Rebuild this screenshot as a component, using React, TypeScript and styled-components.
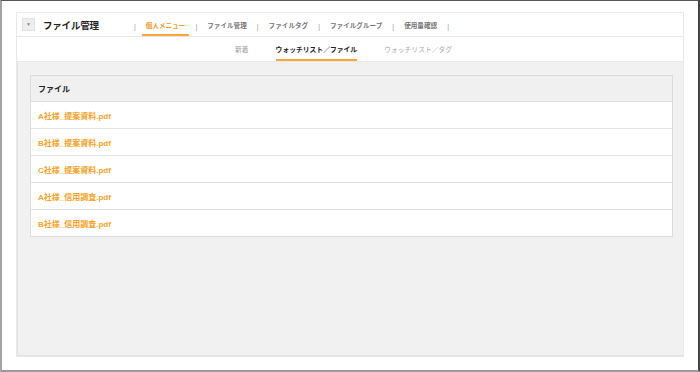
import React from "react";
import styled, { createGlobalStyle } from "styled-components";

const Global = createGlobalStyle`
  * { box-sizing: border-box; }
  html, body { margin: 0; padding: 0; background: #fff; }
  body { font-family: "Liberation Sans", "Noto Sans CJK JP", sans-serif; }
`;

const Frame = styled.div`
  width: 700px;
  height: 372px;
  border-top: 1px solid #555;
  border-left: 2px solid #a3a3a3;
  border-right: 2px solid #444;
  border-bottom: 2px solid #9a9a9a;
  padding: 11px 14px 13px 14px;
  background: #fff;
`;

const Panel = styled.div`
  height: 100%;
  display: flex;
  flex-direction: column;
  border: 1px solid #e8e8e8;
  background: #fff;
`;

const TopBar = styled.div`
  height: 24px;
  display: flex;
  align-items: center;
  padding-left: 5px;
  border-bottom: 1px solid #e6e6e6;
`;

const Toggle = styled.div`
  width: 13px;
  height: 13px;
  background: #eeeeee;
  border: 1px solid #e2e2e2;
  display: flex;
  align-items: center;
  justify-content: center;
  color: #888;
  font-size: 5px;
  line-height: 1;
`;

const Title = styled.div`
  margin-left: 8px;
  font-size: 9.5px;
  font-weight: bold;
  color: #222;
  letter-spacing: -0.2px;
  width: 91px;
  padding-top: 1px;
`;

const Menu = styled.nav`
  display: flex;
  align-items: stretch;
  height: 100%;
`;

const Sep = styled.span`
  display: flex;
  align-items: center;
  color: #999;
  font-size: 7px;
  padding: 3px 0 0;
`;

const MenuItem = styled.span<{ $active?: boolean }>`
  display: flex;
  align-items: center;
  margin: 0 6px;
  padding: 3px 4px 0;
  font-size: 6.6px;
  font-weight: bold;
  color: ${(p) => (p.$active ? "#f39a1e" : "#777")};
  border-bottom: 2px solid ${(p) => (p.$active ? "#f7a637" : "transparent")};
`;

const SubBar = styled.div`
  height: 24px;
  display: flex;
  align-items: stretch;
  padding-left: 218px;
  gap: 27px;
`;

const SubTab = styled.span<{ $active?: boolean; $tone?: string }>`
  display: flex;
  align-items: center;
  padding-top: 1px;
  font-size: 6.8px;
  font-weight: ${(p) => (p.$active ? "bold" : "normal")};
  color: ${(p) => (p.$active ? "#222" : p.$tone || "#999")};
  border-bottom: 2px solid ${(p) => (p.$active ? "#f7a637" : "transparent")};
`;

const Content = styled.div`
  flex: 1;
  background: #f1f1f1;
  border-top: 1px solid #e9e9e9;
  border-left: 1px solid #e2e2e2;
  border-bottom: 1px solid #e2e2e2;
  padding: 13px 10px 0 12px;
`;

const Table = styled.div`
  border: 1px solid #dcdcdc;
  background: #fff;
`;

const HeadRow = styled.div`
  height: 26px;
  display: flex;
  align-items: center;
  padding-left: 7px;
  background: #f0f0f0;
  border-bottom: 1px solid #dedede;
  font-size: 8px;
  font-weight: bold;
  color: #222;
`;

const Row = styled.div`
  height: 27px;
  display: flex;
  align-items: center;
  padding-left: 7px;
  border-bottom: 1px solid #e2e2e2;
  &:last-child { border-bottom: none; height: 26px; }
`;

const FileLink = styled.a`
  font-size: 8px;
  font-weight: bold;
  color: #f7a126;
  text-decoration: none;
`;

const files = [
  "A社様_提案資料.pdf",
  "B社様_提案資料.pdf",
  "C社様_提案資料.pdf",
  "A社様_信用調査.pdf",
  "B社様_信用調査.pdf",
];

const menu = ["個人メニュー", "ファイル管理", "ファイルタグ", "ファイルグループ", "使用量確認"];

export default function App() {
  return (
    <>
      <Global />
      <Frame>
        <Panel>
          <TopBar>
            <Toggle>▼</Toggle>
            <Title>ファイル管理</Title>
            <Menu>
              <Sep>|</Sep>
              {menu.map((m, i) => (
                <React.Fragment key={m}>
                  <MenuItem $active={i === 0}>{m}</MenuItem>
                  <Sep>|</Sep>
                </React.Fragment>
              ))}
            </Menu>
          </TopBar>
          <SubBar>
            <SubTab $tone="#999">新着</SubTab>
            <SubTab $active>ウォッチリスト／ファイル</SubTab>
            <SubTab $tone="#aaa">ウォッチリスト／タグ</SubTab>
          </SubBar>
          <Content>
            <Table>
              <HeadRow>ファイル</HeadRow>
              {files.map((f) => (
                <Row key={f}>
                  <FileLink href="#">{f}</FileLink>
                </Row>
              ))}
            </Table>
          </Content>
        </Panel>
      </Frame>
    </>
  );
}
